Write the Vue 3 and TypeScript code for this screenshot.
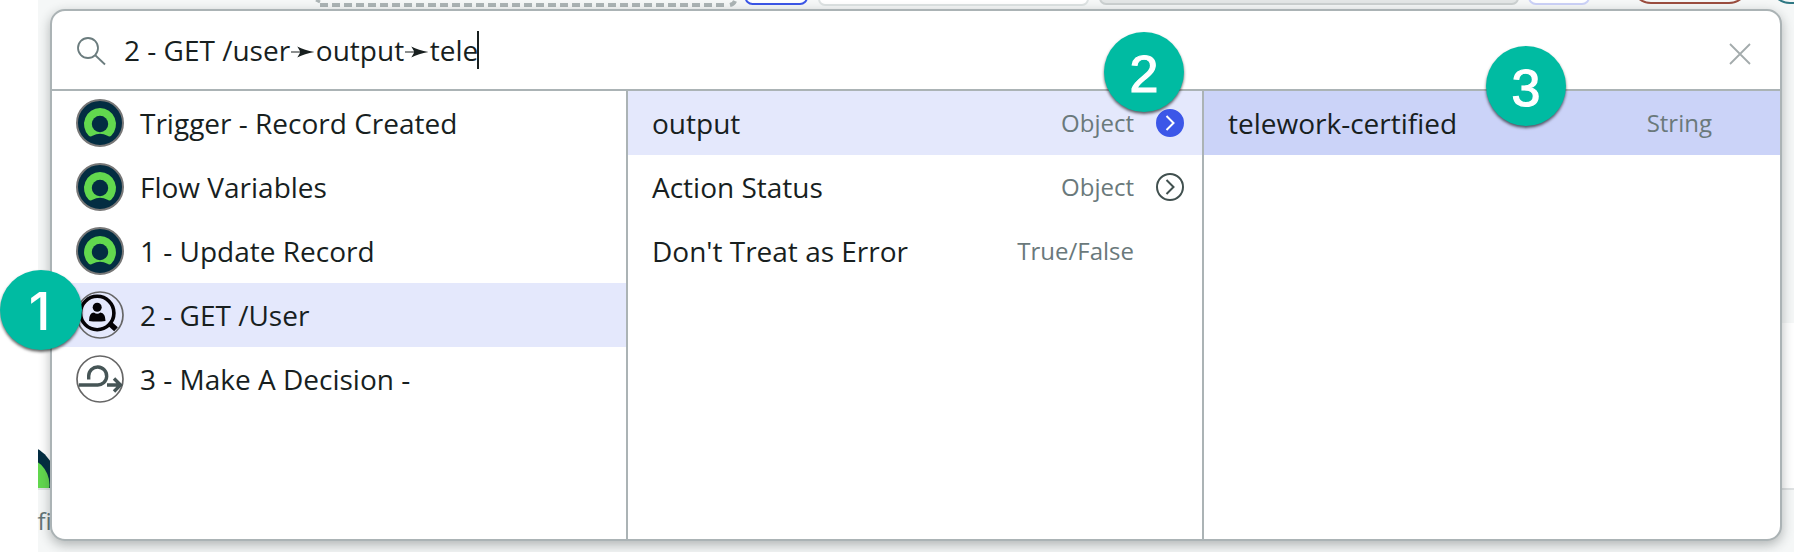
<script setup lang="ts">
interface Step {
  label: string
  icon: 'now' | 'lookup' | 'flow'
  active?: boolean
}
interface Field {
  label: string
  type: string
  expandable?: boolean
  active?: boolean
}

const path: string[] = ['2 - GET /user', 'output', 'tele']

const steps: Step[] = [
  { label: 'Trigger - Record Created', icon: 'now' },
  { label: 'Flow Variables', icon: 'now' },
  { label: '1 - Update Record', icon: 'now' },
  { label: '2 - GET /User', icon: 'lookup', active: true },
  { label: '3 - Make A Decision -', icon: 'flow' },
]

const outputs: Field[] = [
  { label: 'output', type: 'Object', expandable: true, active: true },
  { label: 'Action Status', type: 'Object', expandable: true },
  { label: "Don't Treat as Error", type: 'True/False' },
]

const leaves: Field[] = [{ label: 'telework-certified', type: 'String', active: true }]
</script>

<template>
  <div class="stage">
    <div class="page">
      <div class="band top"></div>
      <div class="band middle"></div>
      <div class="band bottom"></div>
    </div>
    <svg class="behind" width="1794" height="552" viewBox="0 0 1794 552" aria-hidden="true">
      <path d="M316 0L320 2" stroke="#acb4b5" stroke-width="3" />
      <path d="M320 5H700" stroke="#acb4b5" stroke-width="4" stroke-dasharray="8 4" />
      <path d="M730 5Q734 4 735 1" fill="none" stroke="#acb4b5" stroke-width="4" />
      <path d="M704 5H727" stroke="#acb4b5" stroke-width="4" stroke-dasharray="8 4" />
      <rect x="745.5" y="-30" width="61.5" height="34" rx="7" fill="#fff" stroke="#3c57e8" stroke-width="2" />
      <rect x="819" y="-30" width="269" height="35" rx="6" fill="#fff" stroke="#dee3e3" stroke-width="2" />
      <rect x="1100" y="-30" width="418" height="34" rx="6" fill="#e3e6e6" stroke="#ccd1d1" stroke-width="2" />
      <rect x="1529" y="-30" width="60" height="34" rx="7" fill="#fff" stroke="#ccd2f8" stroke-width="2" />
      <rect x="1632" y="-36" width="116" height="39" rx="19" fill="#f5f7f7" stroke="#9b4d3f" stroke-width="2" />
      <rect x="1771" y="-36" width="120" height="39" rx="19" fill="#f5f7f7" stroke="#2f7884" stroke-width="2" />
      <circle cx="20" cy="479" r="35" fill="#032d42" />
      <circle cx="21" cy="485" r="28.5" fill="#62d84e" />
      <path d="M0 440H38V552H0Z" fill="#fff" />
      <path d="M38 488H90V530H38Z" fill="#f5f7f7" />
      <path d="M38 489H90" stroke="#dfe2e3" stroke-width="2" />
    </svg>
    <span class="peek">fi</span>

    <section class="panel">
      <header class="search">
        <svg class="glass" width="30" height="30" viewBox="0 0 30 30">
          <circle cx="12" cy="12" r="10" />
          <path d="M19 19L29 28.5" />
        </svg>
        <div class="query">
          <template v-for="(part, i) in path" :key="part">
            <svg v-if="i > 0" class="arrow" width="25.7" height="16" viewBox="0 0 25.7 16">
              <path d="M1 7.4H10.2L7.3 2.6Q14.5 6.4 24.5 8Q14.5 9.6 7.3 13.4L10.2 8.6H1Z" />
            </svg>
            <span>{{ part }}</span>
          </template>
          <i class="caret"></i>
        </div>
        <svg class="close" width="22" height="22" viewBox="0 0 22 22">
          <path d="M1 1L21 21M21 1L1 21" />
        </svg>
      </header>

      <div class="columns">
        <ul class="column">
          <li v-for="s in steps" :key="s.label" class="row step" :class="{ active: s.active }">
            <svg class="avatar" width="48" height="48" viewBox="0 0 48 48">
              <g v-if="s.icon === 'now'">
                <circle cx="24" cy="24" r="23" fill="#032d42" stroke="#777" stroke-width="2" />
                <path d="M24 9A16.3 16.3 0 0 0 12.6 36.6Q14.4 38.2 16.5 36.8Q24 32.8 31.5 36.8Q33.6 38.2 35.4 36.6A16.3 16.3 0 0 0 24 9Z" fill="#62d84e" />
                <circle cx="24" cy="25" r="8.2" fill="#032d42" />
              </g>
              <g v-else-if="s.icon === 'lookup'">
                <circle cx="24" cy="24" r="23" fill="none" stroke="#666" stroke-width="1.7" />
                <circle cx="21.2" cy="22" r="16.7" fill="none" stroke="#050305" stroke-width="3.6" />
                <path d="M33 32L40 38.2" stroke="#050305" stroke-width="5.5" />
                <circle cx="21.2" cy="16.3" r="4.5" fill="#050305" />
                <path d="M13 30Q13 21.5 18 21.5Q21.2 24 24.4 21.5Q29.5 22 29.5 30Q21 31 13 30Z" fill="#050305" />
              </g>
              <g v-else fill="none">
                <circle cx="24" cy="24" r="23" fill="#fff" stroke="#666" stroke-width="1.7" />
                <g stroke="#465556" stroke-width="3.4">
                  <path d="M3 30H21A9 9 0 1 0 12.7 21V24.5" />
                  <path d="M31 30H44M38 23.5L44.5 30L38 36.5" />
                </g>
              </g>
            </svg>
            <span class="name">{{ s.label }}</span>
          </li>
        </ul>
        <ul class="column">
          <li v-for="f in outputs" :key="f.label" class="row" :class="{ active: f.active }">
            <span class="name">{{ f.label }}</span>
            <span class="type">{{ f.type }}</span>
            <span class="slot">
              <svg v-if="f.expandable" class="go" width="28" height="28" viewBox="0 0 28 28">
                <circle cx="14" cy="14" r="13" />
                <path d="M10.5 7L17.5 14L10.5 21" />
              </svg>
            </span>
          </li>
        </ul>
        <ul class="column">
          <li v-for="f in leaves" :key="f.label" class="row chosen">
            <span class="name">{{ f.label }}</span>
            <span class="type">{{ f.type }}</span>
            <span class="slot"></span>
          </li>
        </ul>
      </div>
    </section>

    <div class="badge one">1</div>
    <div class="badge two">2</div>
    <div class="badge three">3</div>
  </div>
</template>

<style>
html,
body {
  margin: 0;
  background: #fff;
  overflow: hidden;
}
</style>

<style scoped>
.stage {
  position: relative;
  width: 1794px;
  height: 552px;
  overflow: hidden;
  box-sizing: border-box;
  padding: 9px 12px 11px 50px;
  font-family: 'Open Sans', 'Noto Sans', sans-serif;
  color: #181f1f;
}
.page {
  position: absolute;
  inset: 0 0 0 38px;
  display: flex;
  flex-direction: column;
}
.band { background: #f5f7f7; }
.top { height: 323px; }
.middle { height: 165px; background: #fff; }
.bottom { flex: 1; border-top: 2px solid #dfe2e3; }
.behind { position: absolute; left: 0; top: 0; }
.peek {
  position: absolute;
  left: 37.5px;
  top: 504px;
  font-size: 24px;
  line-height: 34px;
  color: #647476;
}
.panel {
  position: relative;
  width: 1732px;
  height: 532px;
  box-sizing: border-box;
  display: flex;
  flex-direction: column;
  border: 2px solid #abb3b5;
  border-radius: 15px;
  background: #fff;
  box-shadow: 0 4px 12px rgba(30, 40, 40, 0.32);
  overflow: hidden;
}
.search {
  height: 80px;
  box-sizing: border-box;
  flex: none;
  display: flex;
  align-items: center;
  padding: 0 29px 0 24px;
  border-bottom: 2px solid #abb3b5;
}
.glass { fill: none; stroke: #6b7c7e; stroke-width: 1.8; margin-top: 2px; }
.query {
  display: flex;
  align-items: center;
  margin-left: 18px;
  flex: 1;
  font-size: 28px;
  line-height: 38px;
  white-space: pre;
}
.arrow { fill: #181f1f; margin-top: 3px; }
.caret { width: 2px; height: 38px; margin-left: -1px; background: #181f1f; }
.close { fill: none; stroke: #a3abac; stroke-width: 1.8; margin-top: 7px; }
.columns { flex: 1; display: flex; }
.column {
  width: 574px;
  margin: 0;
  padding: 0;
  list-style: none;
  border-right: 2px solid #abb3b5;
}
.column:last-child { width: 576px; border-right: 0; }
.row {
  height: 64px;
  box-sizing: border-box;
  padding: 0 18px 0 24px;
  display: flex;
  align-items: center;
}
.active { background: #e4e8fc; }
.chosen { background: #cbd3f8; }
.avatar { margin-right: 16px; }
.name { font-size: 28px; line-height: 38px; flex: 1; white-space: nowrap; }
.type { font-size: 24px; line-height: 34px; color: #6a797b; }
.slot { width: 50px; display: flex; justify-content: flex-end; }
.go { fill: none; stroke: #41504f; stroke-width: 2; }
.active .go circle { fill: #3c57e8; stroke: #3c57e8; }
.active .go path { stroke: #fff; }
.badge {
  position: absolute;
  box-sizing: border-box;
  width: 80px;
  height: 80px;
  border-radius: 50%;
  background: #00bba2;
  color: #fff;
  font: 52px/84px 'Liberation Sans', Arial, sans-serif;
  -webkit-text-stroke: 1.2px #fff;
  text-align: center;
  box-shadow: 0 2px 3px rgba(0, 0, 0, 0.6);
}
.one {
  left: 0;
  top: 270px;
  width: 82px;
  padding-right: 3px;
  font-family: Inter, sans-serif;
  font-weight: 500;
  -webkit-text-stroke: 0;
}
.two { left: 1104px; top: 32px; }
.three { left: 1486px; top: 46px; }
</style>
